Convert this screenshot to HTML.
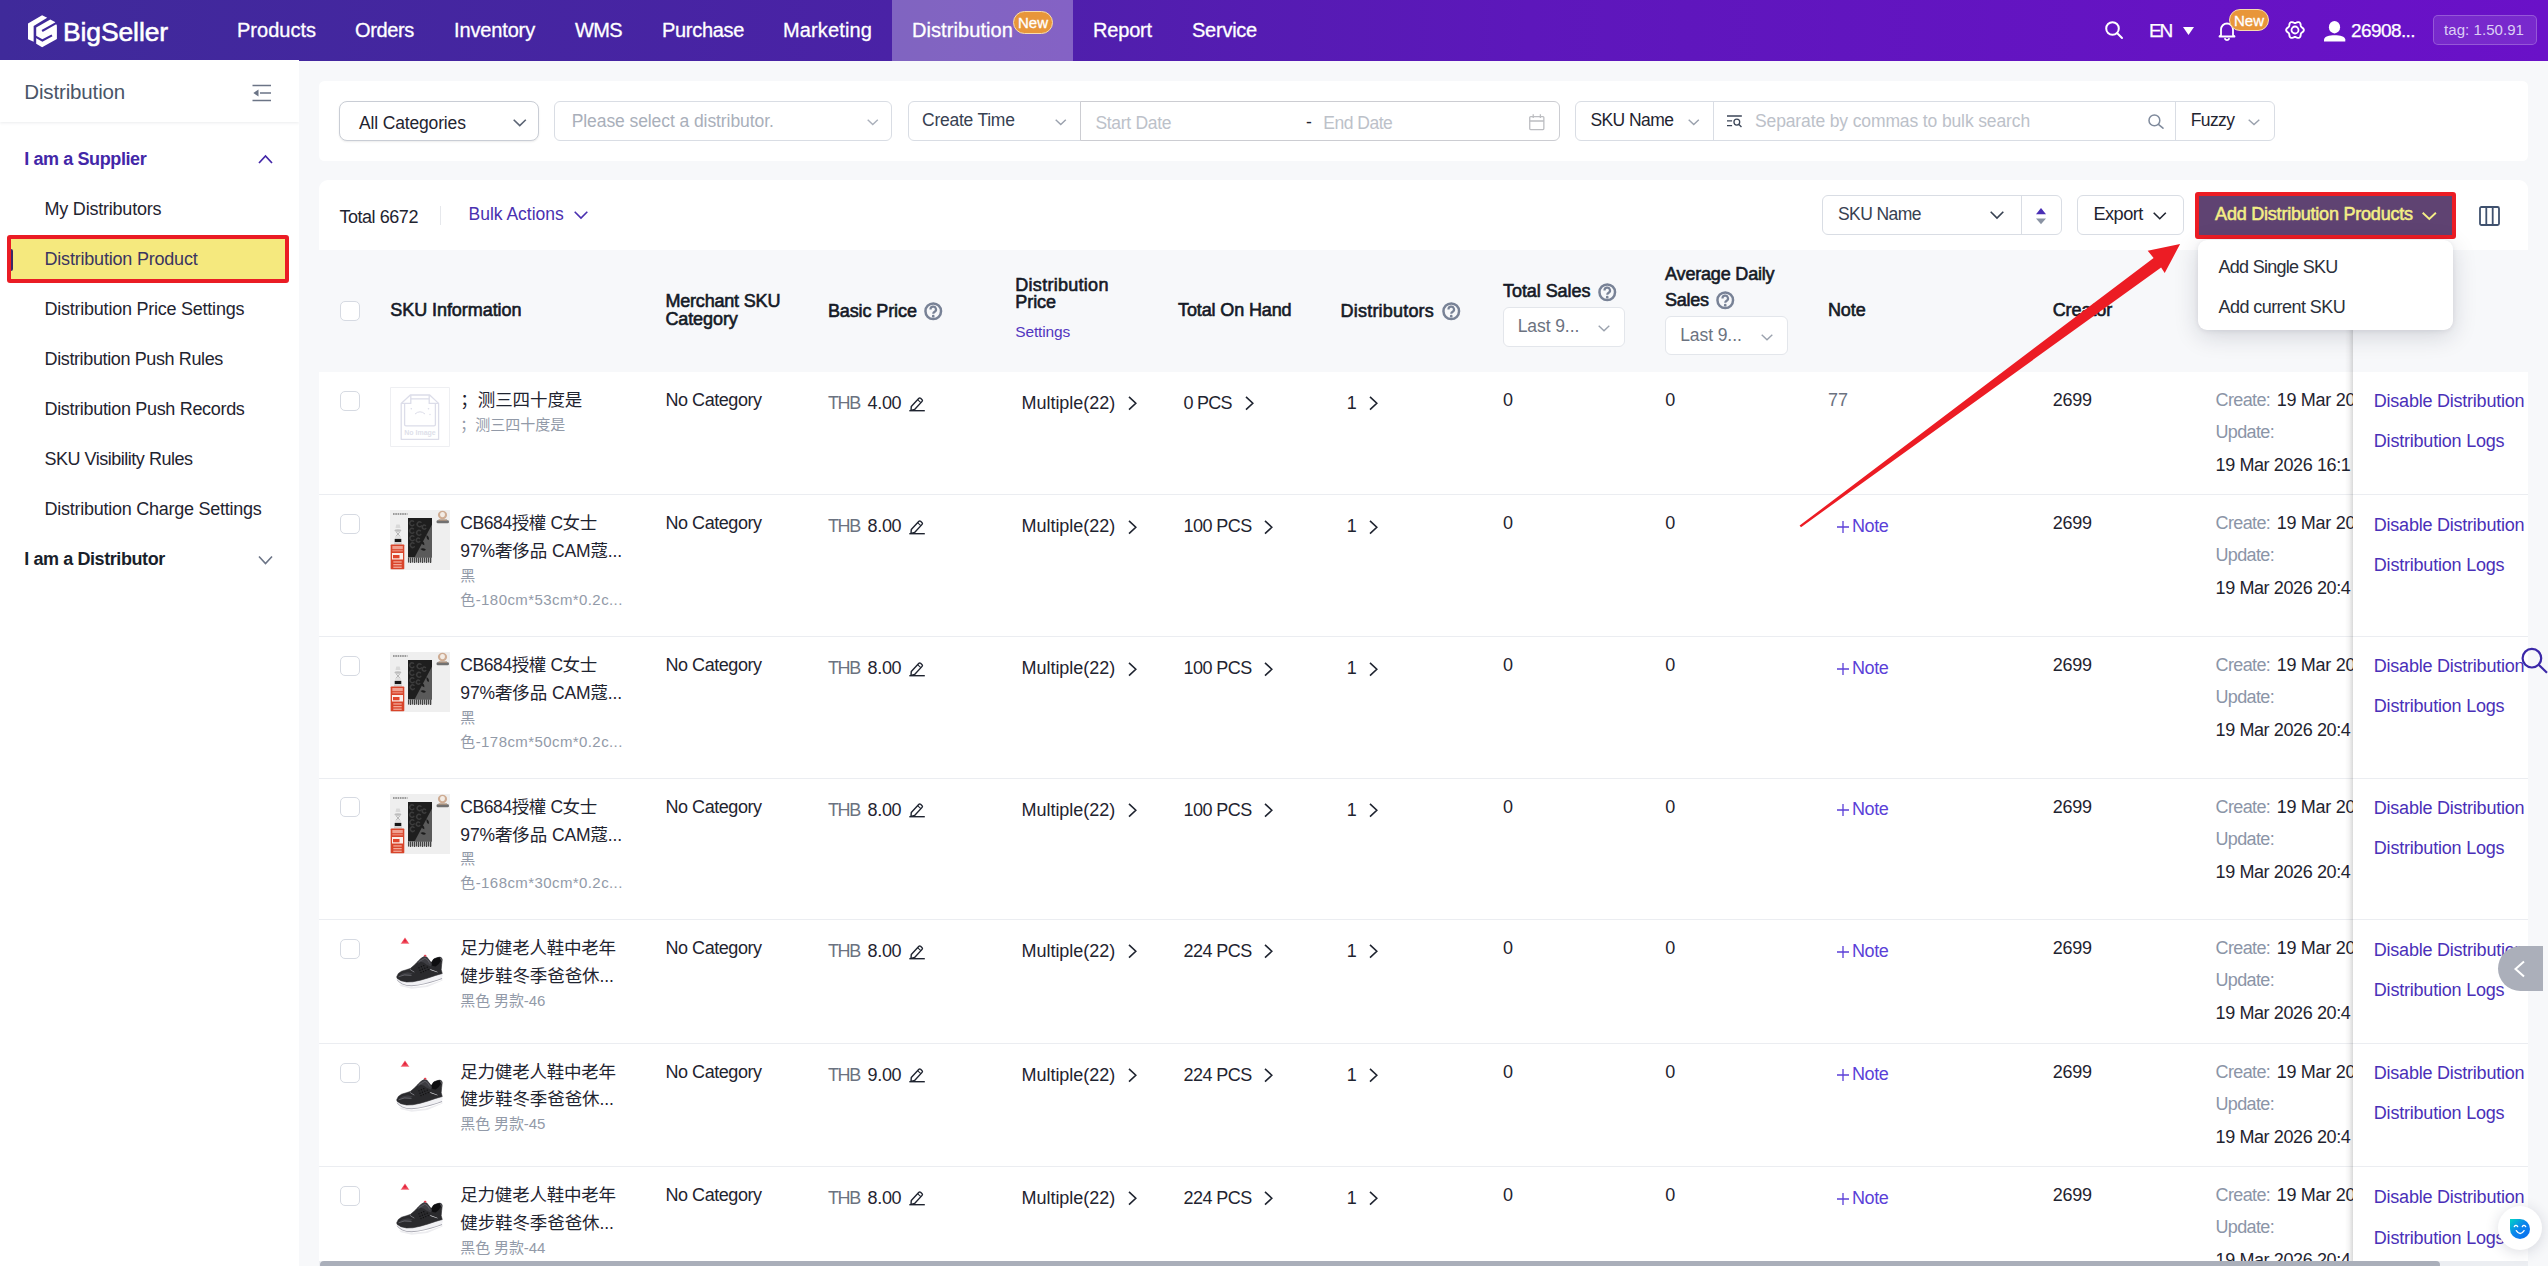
<!DOCTYPE html>
<html lang="en"><head><meta charset="utf-8"><title>BigSeller - Distribution Product</title>
<style>
*{box-sizing:border-box;margin:0;padding:0}
html,body{width:2548px;height:1266px;overflow:hidden;background:#f7f8fa;
  font-family:"Liberation Sans","Noto Sans CJK SC",sans-serif;color:#1f2430}
.abs{position:absolute}
.t{position:absolute;white-space:pre;line-height:1;}
svg{position:absolute;overflow:visible}
#nav{position:absolute;left:0;top:0;width:2548px;height:60.7px;
  background:linear-gradient(90deg,#3f2a9a 0%,#4a22a6 35%,#5d17bb 60%,#6a11c8 100%)}
#navact{position:absolute;left:892px;top:0;width:181px;height:60.7px;background:rgba(255,255,255,.30)}
.badge{position:absolute;background:#e8963a;border:1.5px solid #f7dcae;border-radius:12px;color:#fff;
  font-size:15px;line-height:1;text-align:center;-webkit-text-stroke:0.3px #fff}
#side{position:absolute;left:0;top:60px;width:298.5px;height:1206px;background:#fff;overflow:hidden}
#sidehead{position:absolute;left:0;top:0;width:298.5px;height:62px;background:#fff;
  box-shadow:0 1px 3px rgba(30,40,70,.09)}
.card{position:absolute;background:#fff;border-radius:8px}
.box{position:absolute;background:#fff;border:1px solid #d9dde4;border-radius:6px}
.sep{position:absolute;height:1px;background:#ebedf1;left:319px;width:2209px}
.cb{position:absolute;width:20px;height:20px;border:1px solid #d6dae2;border-radius:5px;background:#fff}
.img{position:absolute;width:60px;height:60px;overflow:hidden}

</style></head>
<body>
<div id="nav"><div id="navact"></div>
<svg style="left:27.85px;top:14.7px" width="29" height="32.5" viewBox="0 0 29 32.5">
<path d="M0 8.5 L14.1 0.3 L19.2 2.8 L5.65 11 V26.7 L0 24.2 Z" fill="#fff"/>
<path d="M8.2 12.6 L22.3 4.4 L27 7.1 L28.9 10.4 V23.9 L14.1 32.2 L8.2 28.7 Z" fill="#fff"/>
<path d="M14.1 16 L29 7.6" stroke="#40299b" stroke-width="2.1" fill="none"/>
<path d="M7.5 21.6 L14.4 25.5 L24 20.3" stroke="#40299b" stroke-width="2.1" fill="none"/>
</svg>
<div class="t " style="left:63.0px;top:19.0px;font-size:26.5px;font-weight:400;color:#fff;letter-spacing:-0.118px;-webkit-text-stroke:0.55px #fff;">BigSeller</div>
<div class="t " style="left:237.0px;top:20.0px;font-size:20px;font-weight:400;color:#fff;letter-spacing:0.008px;-webkit-text-stroke:0.3px #fff;">Products</div>
<div class="t " style="left:355.0px;top:20.0px;font-size:20px;font-weight:400;color:#fff;letter-spacing:-0.354px;-webkit-text-stroke:0.3px #fff;">Orders</div>
<div class="t " style="left:454.0px;top:20.0px;font-size:20px;font-weight:400;color:#fff;letter-spacing:-0.141px;-webkit-text-stroke:0.3px #fff;">Inventory</div>
<div class="t " style="left:575.0px;top:20.0px;font-size:20px;font-weight:400;color:#fff;letter-spacing:-0.630px;-webkit-text-stroke:0.3px #fff;">WMS</div>
<div class="t " style="left:662.0px;top:20.0px;font-size:20px;font-weight:400;color:#fff;letter-spacing:-0.312px;-webkit-text-stroke:0.3px #fff;">Purchase</div>
<div class="t " style="left:783.0px;top:20.0px;font-size:20px;font-weight:400;color:#fff;letter-spacing:0.132px;-webkit-text-stroke:0.3px #fff;">Marketing</div>
<div class="t " style="left:912.0px;top:20.0px;font-size:20px;font-weight:400;color:#fff;letter-spacing:0.079px;-webkit-text-stroke:0.3px #fff;">Distribution</div>
<div class="t " style="left:1093.0px;top:20.0px;font-size:20px;font-weight:400;color:#fff;letter-spacing:-0.172px;-webkit-text-stroke:0.3px #fff;">Report</div>
<div class="t " style="left:1192.0px;top:20.0px;font-size:20px;font-weight:400;color:#fff;letter-spacing:-0.243px;-webkit-text-stroke:0.3px #fff;">Service</div>
<div class="badge" style="left:1013px;top:11px;width:40px;height:23px;padding-top:3px">New</div>
<svg style="left:2104px;top:20px" width="20" height="20" viewBox="0 0 20 20" fill="none" stroke="#fff" stroke-width="2" stroke-linecap="round"><circle cx="8.5" cy="8.5" r="6.3"/><path d="M13.3 13.3 L18 18"/></svg>
<div class="t " style="left:2149.0px;top:20.7px;font-size:19px;font-weight:400;color:#fff;letter-spacing:-2.203px;-webkit-text-stroke:0.25px #fff;">EN</div>
<svg style="left:2183px;top:27px" width="11" height="8" viewBox="0 0 11 8"><path d="M0 0 H11 L5.5 8 Z" fill="#fff"/></svg>
<svg style="left:2218px;top:21px" width="18" height="20" viewBox="0 0 18 20" fill="none" stroke="#fff" stroke-width="1.8" stroke-linejoin="round" stroke-linecap="round"><path d="M3 14 V8.5 A6 6 0 0 1 15 8.5 V14 L16.5 15.5 H1.5 Z"/><path d="M7 17.8 A2.2 2.2 0 0 0 11 17.8"/></svg>
<div class="badge" style="left:2229px;top:9px;width:40px;height:22px;padding-top:2.5px">New</div>
<svg style="left:2284.6px;top:20.3px" width="20" height="20" viewBox="0 0 20 20" fill="none" stroke="#fff" stroke-width="1.9" stroke-linejoin="round"><path d="M18.85 10.00 L18.69 10.76 L18.25 11.45 L17.63 12.04 L16.98 12.54 L16.41 12.99 L16.02 13.47 L15.80 14.06 L15.69 14.77 L15.59 15.59 L15.38 16.42 L15.00 17.15 L14.43 17.66 L13.69 17.91 L12.86 17.87 L12.04 17.63 L11.29 17.31 L10.62 17.05 L10.00 16.95 L9.38 17.05 L8.71 17.31 L7.96 17.63 L7.14 17.87 L6.31 17.91 L5.58 17.66 L5.00 17.15 L4.62 16.42 L4.41 15.59 L4.31 14.77 L4.20 14.06 L3.98 13.47 L3.59 12.99 L3.02 12.54 L2.37 12.04 L1.75 11.45 L1.31 10.76 L1.15 10.00 L1.31 9.24 L1.75 8.55 L2.37 7.96 L3.02 7.46 L3.59 7.01 L3.98 6.52 L4.20 5.94 L4.31 5.23 L4.41 4.41 L4.62 3.58 L5.00 2.85 L5.57 2.34 L6.31 2.09 L7.14 2.13 L7.96 2.37 L8.71 2.69 L9.38 2.95 L10.00 3.05 L10.62 2.95 L11.29 2.69 L12.04 2.37 L12.86 2.13 L13.69 2.09 L14.43 2.34 L15.00 2.85 L15.38 3.58 L15.59 4.41 L15.69 5.23 L15.80 5.94 L16.02 6.52 L16.41 7.01 L16.98 7.46 L17.63 7.96 L18.25 8.55 L18.69 9.24 Z"/><circle cx="10" cy="10" r="3.5" stroke-width="1.8"/></svg>
<svg style="left:2324px;top:20.8px" width="21.5" height="21" viewBox="0 0 21.5 21"><ellipse cx="10.5" cy="6.2" rx="5.6" ry="6.2" fill="#fff"/><path d="M0 20.6 V18.5 C0.5 15.6 5 14.3 10.700 14.300 S20.800 15.600 21.300 18.500 V20.600 Z" fill="#fff"/></svg>
<div class="t " style="left:2351.0px;top:20.7px;font-size:19px;font-weight:400;color:#fff;letter-spacing:-0.584px;-webkit-text-stroke:0.25px #fff;">26908...</div>
<div class="abs" style="left:2433px;top:15px;width:104px;height:30px;border:1px solid rgba(255,255,255,.22);background:rgba(255,255,255,.10);border-radius:5px"></div>
<div class="t " style="left:2444.0px;top:21.6px;font-size:15px;font-weight:400;color:#dccff5;letter-spacing:0.064px;">tag: 1.50.91</div>
</div>
<div id="side"><div id="sidehead"></div></div>
<div class="t " style="left:24.3px;top:81.6px;font-size:20.5px;font-weight:400;color:#4a5568;letter-spacing:-0.146px;">Distribution</div>
<svg style="left:252px;top:84px" width="20" height="18" viewBox="0 0 20 18" fill="none" stroke="#6b7486" stroke-width="1.6"><path d="M0.5 1.5 H19 M8 9 H19 M0.5 16.5 H19"/><path d="M6.5 5.6 V12.4 L1.3 9 Z" fill="#6b7486" stroke="none"/></svg>
<div class="t " style="left:24.3px;top:150.4px;font-size:18px;font-weight:700;color:#4327a8;letter-spacing:-0.403px;">I am a Supplier</div>
<svg style="left:258px;top:154px" width="15" height="10" viewBox="0 0 15 10" fill="none" stroke="#4327a8" stroke-width="1.7"><path d="M1 9 L7.5 2 L14 9"/></svg>
<div class="abs" style="left:6.7px;top:234.6px;width:282px;height:48.3px;background:#f5e97e;border:4px solid #ea1c24;border-radius:3px"></div>
<div class="abs" style="left:10.5px;top:249px;width:2.5px;height:22px;background:#3c2a66;border-radius:0 2px 2px 0"></div>
<div class="t " style="left:44.5px;top:200.2px;font-size:18px;font-weight:400;color:#1f2430;letter-spacing:-0.214px;">My Distributors</div>
<div class="t " style="left:44.5px;top:250.1px;font-size:18px;font-weight:400;color:#3a3560;letter-spacing:-0.204px;">Distribution Product</div>
<div class="t " style="left:44.5px;top:300.0px;font-size:18px;font-weight:400;color:#1f2430;letter-spacing:-0.237px;">Distribution Price Settings</div>
<div class="t " style="left:44.5px;top:349.9px;font-size:18px;font-weight:400;color:#1f2430;letter-spacing:-0.374px;">Distribution Push Rules</div>
<div class="t " style="left:44.5px;top:399.8px;font-size:18px;font-weight:400;color:#1f2430;letter-spacing:-0.324px;">Distribution Push Records</div>
<div class="t " style="left:44.5px;top:449.7px;font-size:18px;font-weight:400;color:#1f2430;letter-spacing:-0.487px;">SKU Visibility Rules</div>
<div class="t " style="left:44.5px;top:499.6px;font-size:18px;font-weight:400;color:#1f2430;letter-spacing:-0.254px;">Distribution Charge Settings</div>
<div class="t " style="left:24.3px;top:549.9px;font-size:18px;font-weight:700;color:#1a1f2b;letter-spacing:-0.418px;">I am a Distributor</div>
<svg style="left:258px;top:555px" width="15" height="10" viewBox="0 0 15 10" fill="none" stroke="#6b7486" stroke-width="1.6"><path d="M1 1.5 L7.5 8.5 L14 1.5"/></svg>
<div class="card" style="left:319px;top:81px;width:2209px;height:80px;border-radius:5.5px"></div>
<div class="box" style="left:339px;top:101px;width:200px;height:40px;border-color:#c9cdd5;border-radius:8px;box-shadow:0 1px 2px rgba(0,0,0,.08)"></div>
<div class="t " style="left:359.0px;top:114.8px;font-size:17.5px;font-weight:400;color:#1f2430;letter-spacing:-0.154px;">All Categories</div>
<svg style="left:513px;top:119px" width="13.5" height="7.5" viewBox="0 0 13.5 7.5" fill="none" stroke="#5b6474" stroke-width="1.6"><path d="M0.7 0.7 L6.75 6.6 L12.8 0.7"/></svg>
<div class="box" style="left:554px;top:101px;width:338px;height:40px"></div>
<div class="t " style="left:571.7px;top:113.1px;font-size:17.5px;font-weight:400;color:#a9afba;letter-spacing:-0.081px;">Please select a distributor.</div>
<svg style="left:867px;top:118.5px" width="11.5" height="6.5" viewBox="0 0 11.5 6.5" fill="none" stroke="#aab0bb" stroke-width="1.4"><path d="M0.7 0.7 L5.75 5.6 L10.8 0.7"/></svg>
<div class="box" style="left:907.5px;top:101px;width:174px;height:40px;border-radius:6px 0 0 6px"></div>
<div class="t " style="left:922.0px;top:111.6px;font-size:17.5px;font-weight:400;color:#374151;letter-spacing:-0.237px;">Create Time</div>
<svg style="left:1054.5px;top:119px" width="11.5" height="6.5" viewBox="0 0 11.5 6.5" fill="none" stroke="#9aa1ad" stroke-width="1.4"><path d="M0.7 0.7 L5.75 5.6 L10.8 0.7"/></svg>
<div class="box" style="left:1080px;top:101px;width:480px;height:40px;border-color:#cccdd2;border-radius:0 6px 6px 0"></div>
<div class="t " style="left:1095.4px;top:114.8px;font-size:17.5px;font-weight:400;color:#bcc1c9;letter-spacing:-0.290px;">Start Date</div>
<div class="t " style="left:1306.0px;top:113.8px;font-size:17.5px;font-weight:400;color:#1f2430;">-</div>
<div class="t " style="left:1323.3px;top:114.8px;font-size:17.5px;font-weight:400;color:#bcc1c9;letter-spacing:-0.496px;">End Date</div>
<svg style="left:1529px;top:113.5px" width="15.6" height="16.5" viewBox="0 0 17 16.5" preserveAspectRatio="none" fill="none" stroke="#bcbdc1" stroke-width="1.4"><rect x="0.8" y="2.6" width="15.4" height="13" rx="1"/><path d="M0.8 7 H16.2 M4.6 0.3 V4 M12.4 0.3 V4"/></svg>
<div class="box" style="left:1575px;top:101px;width:700px;height:40px"></div>
<div class="abs" style="left:1713px;top:101px;width:1px;height:40px;background:#d9dde4"></div>
<div class="abs" style="left:2175px;top:101px;width:1px;height:40px;background:#d9dde4"></div>
<div class="t " style="left:1590.4px;top:111.6px;font-size:17.5px;font-weight:400;color:#1f2430;letter-spacing:-0.579px;">SKU Name</div>
<svg style="left:1688px;top:119px" width="11.5" height="6.5" viewBox="0 0 11.5 6.5" fill="none" stroke="#9aa1ad" stroke-width="1.4"><path d="M0.7 0.7 L5.75 5.6 L10.8 0.7"/></svg>
<svg style="left:1726.5px;top:114.5px" width="15.3" height="12.6" viewBox="0 0 16.5 13" preserveAspectRatio="none" fill="none" stroke="#3c4658" stroke-width="1.4"><path d="M0 1 H16 M0 6 H5.5 M0 11 H5.5"/><circle cx="10.6" cy="7.3" r="3.1"/><path d="M12.9 9.7 L15.6 12.4"/></svg>
<div class="t " style="left:1755.0px;top:113.1px;font-size:17.5px;font-weight:400;color:#bcc1c9;letter-spacing:-0.126px;">Separate by commas to bulk search</div>
<svg style="left:2148px;top:113.5px" width="16" height="15" viewBox="0 0 16 15" fill="none" stroke="#7f8a9c" stroke-width="1.5" stroke-linecap="round"><circle cx="6.4" cy="6.4" r="5.4"/><path d="M10.4 10.4 L15 14.2"/></svg>
<div class="t " style="left:2190.8px;top:111.7px;font-size:17.5px;font-weight:400;color:#1f2430;letter-spacing:-0.637px;">Fuzzy</div>
<svg style="left:2248px;top:119px" width="12" height="6.5" viewBox="0 0 12 6.5" fill="none" stroke="#9aa1ad" stroke-width="1.4"><path d="M0.7 0.7 L6.0 5.6 L11.3 0.7"/></svg>
<div class="card" style="left:319px;top:180px;width:2209px;height:1100px;border-radius:9px"></div>
<div class="t " style="left:339.4px;top:207.7px;font-size:18px;font-weight:400;color:#1f2430;letter-spacing:-0.448px;">Total 6672</div>
<div class="abs" style="left:440px;top:205.5px;width:1px;height:19px;background:#e6e8ec"></div>
<div class="t " style="left:468.5px;top:205.8px;font-size:17.5px;font-weight:400;color:#4a30b0;letter-spacing:-0.011px;">Bulk Actions</div>
<svg style="left:573.7px;top:211.4px" width="14" height="8" viewBox="0 0 14 8" fill="none" stroke="#4a30b0" stroke-width="1.6"><path d="M0.7 0.7 L7.0 7.1 L13.3 0.7"/></svg>
<div class="box" style="left:1821.8px;top:195px;width:240.2px;height:39.5px"></div>
<div class="abs" style="left:2021px;top:195px;width:1px;height:39.5px;background:#d9dde4"></div>
<div class="t " style="left:1837.9px;top:205.8px;font-size:17.5px;font-weight:400;color:#374151;letter-spacing:-0.554px;">SKU Name</div>
<svg style="left:1990.3px;top:211.4px" width="14" height="8" viewBox="0 0 14 8" fill="none" stroke="#374151" stroke-width="1.6"><path d="M0.7 0.7 L7.0 7.1 L13.3 0.7"/></svg>
<svg style="left:2036px;top:207.5px" width="10" height="16.5" viewBox="0 0 10 16.5"><path d="M5 0 L10 6.3 H0 Z" fill="#4a2fb5"/><path d="M0 10.6 H10 L5 16.3 Z" fill="#8a93a3"/></svg>
<div class="box" style="left:2077px;top:195px;width:106.5px;height:39.5px"></div>
<div class="t " style="left:2093.5px;top:205.2px;font-size:18.2px;font-weight:400;color:#1f2430;letter-spacing:-0.563px;">Export</div>
<svg style="left:2152.9px;top:211.6px" width="13.5" height="7.6" viewBox="0 0 13.5 7.6" fill="none" stroke="#1f2430" stroke-width="1.6"><path d="M0.7 0.7 L6.75 6.699999999999999 L12.8 0.7"/></svg>
<div class="abs" style="left:2195px;top:192px;width:261px;height:47px;background:#5f4372;border:4px solid #ec1c24;border-radius:3px"></div>
<div class="t " style="left:2215.1px;top:205.0px;font-size:18px;font-weight:400;color:#f4ee86;letter-spacing:-0.216px;-webkit-text-stroke:0.55px #f4ee86;">Add Distribution Products</div>
<svg style="left:2422.4px;top:211.6px" width="14.6" height="7.8" viewBox="0 0 14.6 7.8" fill="none" stroke="#f4ee86" stroke-width="1.9"><path d="M0.7 0.7 L7.3 6.8999999999999995 L13.9 0.7"/></svg>
<svg style="left:2478.5px;top:205.5px" width="21" height="20" viewBox="0 0 21 20" fill="none" stroke="#3f516e" stroke-width="1.8"><rect x="1" y="1" width="19" height="18" rx="1.5"/><path d="M7.3 1 V19 M13.7 1 V19"/></svg>
<div class="abs" style="left:319px;top:250px;width:2209px;height:122px;background:#f7f8fa"></div>
<div class="cb" style="left:340px;top:301px"></div>
<div class="t " style="left:390.3px;top:301.4px;font-size:18px;font-weight:400;color:#151a26;letter-spacing:-0.064px;-webkit-text-stroke:0.6px #151a26;">SKU Information</div>
<div class="t " style="left:665.4px;top:291.8px;font-size:18px;font-weight:400;color:#151a26;letter-spacing:-0.187px;-webkit-text-stroke:0.6px #151a26;">Merchant SKU</div>
<div class="t " style="left:665.4px;top:310.2px;font-size:18px;font-weight:400;color:#151a26;letter-spacing:-0.093px;-webkit-text-stroke:0.6px #151a26;">Category</div>
<div class="t " style="left:827.9px;top:301.9px;font-size:18px;font-weight:400;color:#151a26;letter-spacing:-0.103px;-webkit-text-stroke:0.6px #151a26;">Basic Price</div>
<svg style="left:924px;top:302.2px" width="18.5" height="18.5" viewBox="0 0 18.5 18.5" fill="none" stroke="#788296" stroke-width="2.5"><circle cx="9.25" cy="9.25" r="7.8"/><path d="M6.5 7.5 A2.75 2.75 0 1 1 10.7 9.7 C9.6 10.4 9.25 10.8 9.25 11.7" stroke-width="2.2"/><circle cx="9.25" cy="14.2" r="0.8" fill="#788296" stroke-width="1.1"/></svg>
<div class="t " style="left:1015.3px;top:275.8px;font-size:18px;font-weight:400;color:#151a26;letter-spacing:0.279px;-webkit-text-stroke:0.6px #151a26;">Distribution</div>
<div class="t " style="left:1015.3px;top:293.0px;font-size:18px;font-weight:400;color:#151a26;letter-spacing:-0.063px;-webkit-text-stroke:0.6px #151a26;">Price</div>
<div class="t " style="left:1015.3px;top:323.7px;font-size:15.5px;font-weight:400;color:#5236c0;letter-spacing:-0.152px;">Settings</div>
<div class="t " style="left:1178.0px;top:300.9px;font-size:18px;font-weight:400;color:#151a26;letter-spacing:-0.121px;-webkit-text-stroke:0.6px #151a26;">Total On Hand</div>
<div class="t " style="left:1340.6px;top:301.8px;font-size:18px;font-weight:400;color:#151a26;letter-spacing:0.197px;-webkit-text-stroke:0.6px #151a26;">Distributors</div>
<svg style="left:1441.5px;top:302.2px" width="18.5" height="18.5" viewBox="0 0 18.5 18.5" fill="none" stroke="#788296" stroke-width="2.5"><circle cx="9.25" cy="9.25" r="7.8"/><path d="M6.5 7.5 A2.75 2.75 0 1 1 10.7 9.7 C9.6 10.4 9.25 10.8 9.25 11.7" stroke-width="2.2"/><circle cx="9.25" cy="14.2" r="0.8" fill="#788296" stroke-width="1.1"/></svg>
<div class="t " style="left:1503.0px;top:282.0px;font-size:18px;font-weight:400;color:#151a26;letter-spacing:-0.060px;-webkit-text-stroke:0.6px #151a26;">Total Sales</div>
<svg style="left:1598px;top:282.5px" width="18.5" height="18.5" viewBox="0 0 18.5 18.5" fill="none" stroke="#788296" stroke-width="2.5"><circle cx="9.25" cy="9.25" r="7.8"/><path d="M6.5 7.5 A2.75 2.75 0 1 1 10.7 9.7 C9.6 10.4 9.25 10.8 9.25 11.7" stroke-width="2.2"/><circle cx="9.25" cy="14.2" r="0.8" fill="#788296" stroke-width="1.1"/></svg>
<div class="box" style="left:1503.4px;top:307.4px;width:121.5px;height:39.2px;border-color:#e3e6eb"></div>
<div class="t " style="left:1517.7px;top:317.5px;font-size:17.5px;font-weight:400;color:#6b7280;letter-spacing:-0.085px;">Last 9...</div>
<svg style="left:1598px;top:324.9px" width="12" height="6.6" viewBox="0 0 12 6.6" fill="none" stroke="#9aa1ad" stroke-width="1.4"><path d="M0.7 0.7 L6.0 5.699999999999999 L11.3 0.7"/></svg>
<div class="t " style="left:1665.1px;top:264.9px;font-size:18px;font-weight:400;color:#151a26;letter-spacing:-0.187px;-webkit-text-stroke:0.6px #151a26;">Average Daily</div>
<div class="t " style="left:1665.1px;top:291.0px;font-size:18px;font-weight:400;color:#151a26;letter-spacing:-0.306px;-webkit-text-stroke:0.6px #151a26;">Sales</div>
<svg style="left:1716px;top:291.2px" width="18.5" height="18.5" viewBox="0 0 18.5 18.5" fill="none" stroke="#788296" stroke-width="2.5"><circle cx="9.25" cy="9.25" r="7.8"/><path d="M6.5 7.5 A2.75 2.75 0 1 1 10.7 9.7 C9.6 10.4 9.25 10.8 9.25 11.7" stroke-width="2.2"/><circle cx="9.25" cy="14.2" r="0.8" fill="#788296" stroke-width="1.1"/></svg>
<div class="box" style="left:1665.4px;top:316.4px;width:122.2px;height:39px;border-color:#e3e6eb"></div>
<div class="t " style="left:1680.2px;top:327.2px;font-size:17.5px;font-weight:400;color:#6b7280;letter-spacing:-0.085px;">Last 9...</div>
<svg style="left:1760.5px;top:333.7px" width="12" height="6.6" viewBox="0 0 12 6.6" fill="none" stroke="#9aa1ad" stroke-width="1.4"><path d="M0.7 0.7 L6.0 5.699999999999999 L11.3 0.7"/></svg>
<div class="t " style="left:1827.9px;top:300.9px;font-size:18px;font-weight:400;color:#151a26;letter-spacing:-0.083px;-webkit-text-stroke:0.6px #151a26;">Note</div>
<div class="t " style="left:2052.7px;top:300.9px;font-size:18px;font-weight:400;color:#151a26;letter-spacing:-0.076px;-webkit-text-stroke:0.6px #151a26;">Creator</div>
<div class="cb" style="left:340px;top:391.3px"></div>
<div class="img" style="left:390px;top:387.0px;"><svg width="60" height="60" viewBox="0 0 60 60" style="position:static;display:block" fill="none" stroke="#dcdde9" stroke-width="1.3" stroke-linejoin="round"><rect x="0.5" y="0.5" width="59" height="59" stroke="#eeeff2" stroke-width="1"/>
<path d="M11.2 16.4 L20.3 8 H39.7 L48.6 16.4 V52.3 H11.2 Z"/><path d="M20.8 8 V16.4 H11.6 M39.2 8 V16.4 H48.4 M20.8 11.8 H39.2"/><path d="M14.6 16.8 V37.4 Q14.6 38.8 16 38.8 H44 Q45.4 38.8 45.4 37.4 V16.8"/>
<circle cx="21.3" cy="21.8" r="0.8" fill="#dcdde9" stroke="none"/><circle cx="38.5" cy="21.8" r="0.8" fill="#dcdde9" stroke="none"/><circle cx="40" cy="27.5" r="0.7" fill="#dcdde9" stroke="none"/><path d="M25 27 Q30 22.6 35 27" stroke-width="1"/>
<text x="30" y="48.3" font-family="Liberation Sans,sans-serif" font-size="7" font-weight="700" fill="#dedfea" stroke="none" text-anchor="middle">No Image</text></svg></div>
<div class="t " style="left:460.3px;top:391.7px;font-size:17.5px;font-weight:400;color:#1f2430;letter-spacing:-0.071px;">；测三四十度是</div>
<div class="t " style="left:460.3px;top:416.7px;font-size:15px;font-weight:400;color:#929aa8;">；测三四十度是</div>
<div class="t " style="left:665.4px;top:391.2px;font-size:18px;font-weight:400;color:#1f2430;letter-spacing:-0.442px;">No Category</div>
<div class="t " style="left:827.9px;top:394.2px;font-size:18px;font-weight:400;color:#6b7280;letter-spacing:-1.267px;">THB</div>
<div class="t " style="left:867.6px;top:394.2px;font-size:18px;font-weight:400;color:#1f2430;letter-spacing:-0.337px;">4.00</div>
<svg style="left:909px;top:396.6px" width="16" height="14.500" viewBox="0 0 16 14.500" fill="none" stroke="#1f2430" stroke-width="1.400" stroke-linejoin="round"><path d="M2.300 9.400 L9.900 1.300 Q10.700 0.500 11.600 1.300 L13.100 2.700 Q13.900 3.500 13.100 4.400 L5.600 12.500 L2 13.400 Z"/><path d="M8.600 2.700 L11.800 5.700" stroke-width="1.1"/><path d="M0.300 13.700 H15.800"/></svg>
<div class="t " style="left:1021.5px;top:394.2px;font-size:18px;font-weight:400;color:#1f2430;letter-spacing:-0.029px;">Multiple(22)</div>
<svg style="left:1128.3px;top:396.4px" width="9" height="14.5" viewBox="0 0 9 14.5" fill="none" stroke="#1f2430" stroke-width="1.6"><path d="M1 0.8 L7.800 7.250 L1 13.700"/></svg>
<div class="t " style="left:1183.6px;top:394.2px;font-size:18px;font-weight:400;color:#1f2430;letter-spacing:-0.766px;">0 PCS</div>
<svg style="left:1244.6px;top:396.4px" width="9" height="14.5" viewBox="0 0 9 14.5" fill="none" stroke="#1f2430" stroke-width="1.6"><path d="M1 0.8 L7.800 7.250 L1 13.700"/></svg>
<div class="t " style="left:1346.8px;top:394.2px;font-size:18px;font-weight:400;color:#1f2430;">1</div>
<svg style="left:1369px;top:396.4px" width="9" height="14.5" viewBox="0 0 9 14.5" fill="none" stroke="#1f2430" stroke-width="1.6"><path d="M1 0.8 L7.800 7.250 L1 13.700"/></svg>
<div class="t " style="left:1503.0px;top:391.2px;font-size:18px;font-weight:400;color:#1f2430;">0</div>
<div class="t " style="left:1665.2px;top:391.2px;font-size:18px;font-weight:400;color:#1f2430;">0</div>
<div class="t " style="left:1827.9px;top:391.2px;font-size:18px;font-weight:400;color:#6b7280;">77</div>
<div class="t " style="left:2052.7px;top:391.2px;font-size:18px;font-weight:400;color:#1f2430;letter-spacing:-0.212px;">2699</div>
<div class="abs" style="left:2210px;top:372.0px;width:143px;height:123.0px;overflow:hidden"><div class="t " style="left:5.5px;top:19.0px;font-size:18px;font-weight:400;color:#8b95a7;letter-spacing:-0.619px;">Create:</div><div class="t " style="left:66.7px;top:19.0px;font-size:18px;font-weight:400;color:#1f2430;letter-spacing:-0.280px;">19 Mar 2026</div><div class="t " style="left:5.5px;top:51.0px;font-size:18px;font-weight:400;color:#8b95a7;letter-spacing:-0.650px;">Update:</div><div class="t " style="left:5.5px;top:84.1px;font-size:18px;font-weight:400;color:#1f2430;letter-spacing:-0.382px;">19 Mar 2026 16:1</div></div>
<div class="sep" style="top:493.8px"></div>
<div class="cb" style="left:340px;top:513.7px"></div>
<div class="img" style="left:390px;top:509.9px;filter:blur(0.45px);"><svg width="60" height="60" viewBox="0 0 60 60" style="position:static;display:block"><rect width="60" height="60" fill="#efefef"/>
<path d="M3 4 H17.500" stroke="#2a2a2a" stroke-width="1.200" stroke-dasharray="1.600 0.700" opacity=".85"/>
<g opacity=".85"><ellipse cx="52.5" cy="5" rx="4.6" ry="4.2" fill="#c9a184"/><ellipse cx="52.5" cy="4.6" rx="2.4" ry="2.6" fill="#f4ece4"/><rect x="46.5" y="10.3" width="12.5" height="3" rx="1.4" fill="#5a5a5a"/><rect x="48.5" y="9.4" width="8.5" height="1.4" fill="#9b7b62"/></g>
<rect x="18" y="8" width="24" height="39.5" fill="#1e1e1e"/>
<g fill="none" stroke="#3c3c3c" stroke-width="1.500" stroke-linecap="round"><path d="M23.500 11.300 a2.400 2.400 0 1 0 0.300 3.600"/><path d="M31 12.300 a2.400 2.400 0 1 0 0.300 3.600"/><path d="M23.500 18.800 a2.400 2.400 0 1 0 0.300 3.600"/><path d="M30.500 20.800 a2.400 2.400 0 1 0 0.300 3.600"/><path d="M23.800 26.300 a2.400 2.400 0 1 0 0.300 3.600"/><path d="M24 33.300 a2.300 2.300 0 1 0 0.300 3.500"/><path d="M35.500 15.500 a2 2 0 1 0 0.300 3"/><path d="M29.500 28.500 a2 2 0 1 0 0.300 3"/></g>
<path d="M42 14.5 V47.5 H24.5 Z" fill="#5a5a5a"/>
<g fill="#1c1c1c"><path d="M36.5 25 q3 1.5 2.3 5 q-2.6-.6-2.3-5z"/><path d="M31.8 31 q3 1 2.5 4.2 q-3-.3-2.500-4.200z"/><path d="M30.5 39 q2.600-1.600 5.500 0.800 q-2.400 2.400-5.500-.8z"/></g>
<rect x="18" y="47.500" width="24" height="5" fill="#8a8a8a" opacity=".55"/><g stroke="#454545" stroke-width="1.100"><path d="M18.500 47.500v5M20.500 47.500v5.500M22.500 47.500v5M24.500 47.500v5.600M26.500 47.500v5M28.500 47.500v5.600M30.500 47.500v5M32.500 47.500v5.500M34.500 47.500v5M36.500 47.500v5.600M38.500 47.500v5M40.500 47.500v5.500"/></g>
<g><path d="M6.300 14.500h3.400l.8 3.500h-5z" fill="#d9d9d9"/><ellipse cx="7.900" cy="20.500" rx="3.400" ry="1.300" fill="#bdbdbd"/><path d="M6.300 22l3.400 4M9.700 22l-3.400 4" stroke="#999" stroke-width=".7"/><rect x="5" y="26" width="6" height="2.800" fill="#e0e0e0"/><rect x="4.700" y="28.900" width="6.600" height="3.200" fill="#161616"/><rect x="4" y="32.500" width="8" height="2" fill="#cfcfcf"/></g>
<rect x="0.700" y="34.500" width="13.600" height="24.800" rx="0.800" fill="#d8442a"/>
<rect x="2.300" y="36" width="10.500" height="3.200" fill="#f0a090"/><rect x="2.300" y="40.200" width="10.500" height="1.200" fill="#ee8d7a"/>
<rect x="2" y="43" width="11" height="6.500" fill="#fbeeea"/><rect x="3" y="45" width="6.500" height="3.300" fill="#e0452c"/>
<rect x="3.300" y="51.300" width="8.400" height="1.300" fill="#f3a898"/><rect x="3.300" y="54" width="8.400" height="1.300" fill="#f3a898"/><rect x="3.300" y="56.600" width="8.400" height="1.300" fill="#f3a898"/>
</svg></div>
<div class="t " style="left:460.3px;top:515.4px;font-size:17.5px;font-weight:400;color:#1f2430;letter-spacing:-0.411px;">CB684授權 C女士</div>
<div class="t " style="left:460.3px;top:542.9px;font-size:17.5px;font-weight:400;color:#1f2430;letter-spacing:-0.112px;">97%奢侈品 CAM蔻...</div>
<div class="t " style="left:460.3px;top:568.1px;font-size:15px;font-weight:400;color:#929aa8;">黑</div>
<div class="t " style="left:460.3px;top:591.9px;font-size:15px;font-weight:400;color:#929aa8;letter-spacing:0.413px;">色-180cm*53cm*0.2c...</div>
<div class="t " style="left:665.4px;top:514.4px;font-size:18px;font-weight:400;color:#1f2430;letter-spacing:-0.442px;">No Category</div>
<div class="t " style="left:827.9px;top:517.4px;font-size:18px;font-weight:400;color:#6b7280;letter-spacing:-1.267px;">THB</div>
<div class="t " style="left:867.6px;top:517.4px;font-size:18px;font-weight:400;color:#1f2430;letter-spacing:-0.337px;">8.00</div>
<svg style="left:909px;top:519.8px" width="16" height="14.500" viewBox="0 0 16 14.500" fill="none" stroke="#1f2430" stroke-width="1.400" stroke-linejoin="round"><path d="M2.300 9.400 L9.900 1.300 Q10.700 0.500 11.600 1.300 L13.100 2.700 Q13.900 3.500 13.100 4.400 L5.600 12.500 L2 13.400 Z"/><path d="M8.600 2.700 L11.800 5.700" stroke-width="1.1"/><path d="M0.300 13.700 H15.800"/></svg>
<div class="t " style="left:1021.5px;top:517.4px;font-size:18px;font-weight:400;color:#1f2430;letter-spacing:-0.029px;">Multiple(22)</div>
<svg style="left:1128.3px;top:519.6px" width="9" height="14.5" viewBox="0 0 9 14.5" fill="none" stroke="#1f2430" stroke-width="1.6"><path d="M1 0.8 L7.800 7.250 L1 13.700"/></svg>
<div class="t " style="left:1183.6px;top:517.4px;font-size:18px;font-weight:400;color:#1f2430;letter-spacing:-0.578px;">100 PCS</div>
<svg style="left:1264.3999999999999px;top:519.6px" width="9" height="14.5" viewBox="0 0 9 14.5" fill="none" stroke="#1f2430" stroke-width="1.6"><path d="M1 0.8 L7.800 7.250 L1 13.700"/></svg>
<div class="t " style="left:1346.8px;top:517.4px;font-size:18px;font-weight:400;color:#1f2430;">1</div>
<svg style="left:1369px;top:519.6px" width="9" height="14.5" viewBox="0 0 9 14.5" fill="none" stroke="#1f2430" stroke-width="1.6"><path d="M1 0.8 L7.800 7.250 L1 13.700"/></svg>
<div class="t " style="left:1503.0px;top:514.4px;font-size:18px;font-weight:400;color:#1f2430;">0</div>
<div class="t " style="left:1665.2px;top:514.4px;font-size:18px;font-weight:400;color:#1f2430;">0</div>
<svg style="left:1836.600px;top:521.0px" width="12" height="12" viewBox="0 0 12 12" stroke="#5b3fd8" stroke-width="1.300"><path d="M6 0 V12 M0 6 H12"/></svg>
<div class="t " style="left:1852.0px;top:517.0px;font-size:18px;font-weight:400;color:#5b3fd8;letter-spacing:-0.383px;">Note</div>
<div class="t " style="left:2052.7px;top:514.4px;font-size:18px;font-weight:400;color:#1f2430;letter-spacing:-0.212px;">2699</div>
<div class="abs" style="left:2210px;top:495.4px;width:143px;height:123.0px;overflow:hidden"><div class="t " style="left:5.5px;top:19.0px;font-size:18px;font-weight:400;color:#8b95a7;letter-spacing:-0.619px;">Create:</div><div class="t " style="left:66.7px;top:19.0px;font-size:18px;font-weight:400;color:#1f2430;letter-spacing:-0.280px;">19 Mar 2026</div><div class="t " style="left:5.5px;top:51.0px;font-size:18px;font-weight:400;color:#8b95a7;letter-spacing:-0.650px;">Update:</div><div class="t " style="left:5.5px;top:84.1px;font-size:18px;font-weight:400;color:#1f2430;letter-spacing:-0.382px;">19 Mar 2026 20:4</div></div>
<div class="sep" style="top:635.9px"></div>
<div class="cb" style="left:340px;top:655.8px"></div>
<div class="img" style="left:390px;top:652.0px;filter:blur(0.45px);"><svg width="60" height="60" viewBox="0 0 60 60" style="position:static;display:block"><rect width="60" height="60" fill="#efefef"/>
<path d="M3 4 H17.500" stroke="#2a2a2a" stroke-width="1.200" stroke-dasharray="1.600 0.700" opacity=".85"/>
<g opacity=".85"><ellipse cx="52.5" cy="5" rx="4.6" ry="4.2" fill="#c9a184"/><ellipse cx="52.5" cy="4.6" rx="2.4" ry="2.6" fill="#f4ece4"/><rect x="46.5" y="10.3" width="12.5" height="3" rx="1.4" fill="#5a5a5a"/><rect x="48.5" y="9.4" width="8.5" height="1.4" fill="#9b7b62"/></g>
<rect x="18" y="8" width="24" height="39.5" fill="#1e1e1e"/>
<g fill="none" stroke="#3c3c3c" stroke-width="1.500" stroke-linecap="round"><path d="M23.500 11.300 a2.400 2.400 0 1 0 0.300 3.600"/><path d="M31 12.300 a2.400 2.400 0 1 0 0.300 3.600"/><path d="M23.500 18.800 a2.400 2.400 0 1 0 0.300 3.600"/><path d="M30.500 20.800 a2.400 2.400 0 1 0 0.300 3.600"/><path d="M23.800 26.300 a2.400 2.400 0 1 0 0.300 3.600"/><path d="M24 33.300 a2.300 2.300 0 1 0 0.300 3.500"/><path d="M35.500 15.500 a2 2 0 1 0 0.300 3"/><path d="M29.500 28.500 a2 2 0 1 0 0.300 3"/></g>
<path d="M42 14.5 V47.5 H24.5 Z" fill="#5a5a5a"/>
<g fill="#1c1c1c"><path d="M36.5 25 q3 1.5 2.3 5 q-2.6-.6-2.3-5z"/><path d="M31.8 31 q3 1 2.5 4.2 q-3-.3-2.500-4.200z"/><path d="M30.5 39 q2.600-1.600 5.500 0.800 q-2.400 2.400-5.500-.8z"/></g>
<rect x="18" y="47.500" width="24" height="5" fill="#8a8a8a" opacity=".55"/><g stroke="#454545" stroke-width="1.100"><path d="M18.500 47.500v5M20.500 47.500v5.500M22.500 47.500v5M24.500 47.500v5.600M26.500 47.500v5M28.500 47.500v5.600M30.500 47.500v5M32.500 47.500v5.500M34.500 47.500v5M36.500 47.500v5.600M38.500 47.500v5M40.500 47.500v5.500"/></g>
<g><path d="M6.300 14.500h3.400l.8 3.500h-5z" fill="#d9d9d9"/><ellipse cx="7.900" cy="20.500" rx="3.400" ry="1.300" fill="#bdbdbd"/><path d="M6.300 22l3.400 4M9.700 22l-3.400 4" stroke="#999" stroke-width=".7"/><rect x="5" y="26" width="6" height="2.800" fill="#e0e0e0"/><rect x="4.700" y="28.900" width="6.600" height="3.200" fill="#161616"/><rect x="4" y="32.500" width="8" height="2" fill="#cfcfcf"/></g>
<rect x="0.700" y="34.500" width="13.600" height="24.800" rx="0.800" fill="#d8442a"/>
<rect x="2.300" y="36" width="10.500" height="3.200" fill="#f0a090"/><rect x="2.300" y="40.200" width="10.500" height="1.200" fill="#ee8d7a"/>
<rect x="2" y="43" width="11" height="6.500" fill="#fbeeea"/><rect x="3" y="45" width="6.500" height="3.300" fill="#e0452c"/>
<rect x="3.300" y="51.300" width="8.400" height="1.300" fill="#f3a898"/><rect x="3.300" y="54" width="8.400" height="1.300" fill="#f3a898"/><rect x="3.300" y="56.600" width="8.400" height="1.300" fill="#f3a898"/>
</svg></div>
<div class="t " style="left:460.3px;top:657.0px;font-size:17.5px;font-weight:400;color:#1f2430;letter-spacing:-0.411px;">CB684授權 C女士</div>
<div class="t " style="left:460.3px;top:684.5px;font-size:17.5px;font-weight:400;color:#1f2430;letter-spacing:-0.112px;">97%奢侈品 CAM蔻...</div>
<div class="t " style="left:460.3px;top:709.7px;font-size:15px;font-weight:400;color:#929aa8;">黑</div>
<div class="t " style="left:460.3px;top:733.5px;font-size:15px;font-weight:400;color:#929aa8;letter-spacing:0.413px;">色-178cm*50cm*0.2c...</div>
<div class="t " style="left:665.4px;top:656.4px;font-size:18px;font-weight:400;color:#1f2430;letter-spacing:-0.442px;">No Category</div>
<div class="t " style="left:827.9px;top:659.4px;font-size:18px;font-weight:400;color:#6b7280;letter-spacing:-1.267px;">THB</div>
<div class="t " style="left:867.6px;top:659.4px;font-size:18px;font-weight:400;color:#1f2430;letter-spacing:-0.337px;">8.00</div>
<svg style="left:909px;top:661.8000000000001px" width="16" height="14.500" viewBox="0 0 16 14.500" fill="none" stroke="#1f2430" stroke-width="1.400" stroke-linejoin="round"><path d="M2.300 9.400 L9.900 1.300 Q10.700 0.500 11.600 1.300 L13.100 2.700 Q13.900 3.500 13.100 4.400 L5.600 12.500 L2 13.400 Z"/><path d="M8.600 2.700 L11.800 5.700" stroke-width="1.1"/><path d="M0.300 13.700 H15.800"/></svg>
<div class="t " style="left:1021.5px;top:659.4px;font-size:18px;font-weight:400;color:#1f2430;letter-spacing:-0.029px;">Multiple(22)</div>
<svg style="left:1128.3px;top:661.6px" width="9" height="14.5" viewBox="0 0 9 14.5" fill="none" stroke="#1f2430" stroke-width="1.6"><path d="M1 0.8 L7.800 7.250 L1 13.700"/></svg>
<div class="t " style="left:1183.6px;top:659.4px;font-size:18px;font-weight:400;color:#1f2430;letter-spacing:-0.578px;">100 PCS</div>
<svg style="left:1264.3999999999999px;top:661.6px" width="9" height="14.5" viewBox="0 0 9 14.5" fill="none" stroke="#1f2430" stroke-width="1.6"><path d="M1 0.8 L7.800 7.250 L1 13.700"/></svg>
<div class="t " style="left:1346.8px;top:659.4px;font-size:18px;font-weight:400;color:#1f2430;">1</div>
<svg style="left:1369px;top:661.6px" width="9" height="14.5" viewBox="0 0 9 14.5" fill="none" stroke="#1f2430" stroke-width="1.6"><path d="M1 0.8 L7.800 7.250 L1 13.700"/></svg>
<div class="t " style="left:1503.0px;top:656.4px;font-size:18px;font-weight:400;color:#1f2430;">0</div>
<div class="t " style="left:1665.2px;top:656.4px;font-size:18px;font-weight:400;color:#1f2430;">0</div>
<svg style="left:1836.600px;top:663.0px" width="12" height="12" viewBox="0 0 12 12" stroke="#5b3fd8" stroke-width="1.300"><path d="M6 0 V12 M0 6 H12"/></svg>
<div class="t " style="left:1852.0px;top:659.0px;font-size:18px;font-weight:400;color:#5b3fd8;letter-spacing:-0.383px;">Note</div>
<div class="t " style="left:2052.7px;top:656.4px;font-size:18px;font-weight:400;color:#1f2430;letter-spacing:-0.212px;">2699</div>
<div class="abs" style="left:2210px;top:637.1px;width:143px;height:123.0px;overflow:hidden"><div class="t " style="left:5.5px;top:19.0px;font-size:18px;font-weight:400;color:#8b95a7;letter-spacing:-0.619px;">Create:</div><div class="t " style="left:66.7px;top:19.0px;font-size:18px;font-weight:400;color:#1f2430;letter-spacing:-0.280px;">19 Mar 2026</div><div class="t " style="left:5.5px;top:51.0px;font-size:18px;font-weight:400;color:#8b95a7;letter-spacing:-0.650px;">Update:</div><div class="t " style="left:5.5px;top:84.1px;font-size:18px;font-weight:400;color:#1f2430;letter-spacing:-0.382px;">19 Mar 2026 20:4</div></div>
<div class="sep" style="top:778.0px"></div>
<div class="cb" style="left:340px;top:797.1px"></div>
<div class="img" style="left:390px;top:794.1px;filter:blur(0.45px);"><svg width="60" height="60" viewBox="0 0 60 60" style="position:static;display:block"><rect width="60" height="60" fill="#efefef"/>
<path d="M3 4 H17.500" stroke="#2a2a2a" stroke-width="1.200" stroke-dasharray="1.600 0.700" opacity=".85"/>
<g opacity=".85"><ellipse cx="52.5" cy="5" rx="4.6" ry="4.2" fill="#c9a184"/><ellipse cx="52.5" cy="4.6" rx="2.4" ry="2.6" fill="#f4ece4"/><rect x="46.5" y="10.3" width="12.5" height="3" rx="1.4" fill="#5a5a5a"/><rect x="48.5" y="9.4" width="8.5" height="1.4" fill="#9b7b62"/></g>
<rect x="18" y="8" width="24" height="39.5" fill="#1e1e1e"/>
<g fill="none" stroke="#3c3c3c" stroke-width="1.500" stroke-linecap="round"><path d="M23.500 11.300 a2.400 2.400 0 1 0 0.300 3.600"/><path d="M31 12.300 a2.400 2.400 0 1 0 0.300 3.600"/><path d="M23.500 18.800 a2.400 2.400 0 1 0 0.300 3.600"/><path d="M30.500 20.800 a2.400 2.400 0 1 0 0.300 3.600"/><path d="M23.800 26.300 a2.400 2.400 0 1 0 0.300 3.600"/><path d="M24 33.300 a2.300 2.300 0 1 0 0.300 3.500"/><path d="M35.500 15.500 a2 2 0 1 0 0.300 3"/><path d="M29.500 28.500 a2 2 0 1 0 0.300 3"/></g>
<path d="M42 14.5 V47.5 H24.5 Z" fill="#5a5a5a"/>
<g fill="#1c1c1c"><path d="M36.5 25 q3 1.5 2.3 5 q-2.6-.6-2.3-5z"/><path d="M31.8 31 q3 1 2.5 4.2 q-3-.3-2.500-4.200z"/><path d="M30.5 39 q2.600-1.600 5.500 0.800 q-2.400 2.400-5.500-.8z"/></g>
<rect x="18" y="47.500" width="24" height="5" fill="#8a8a8a" opacity=".55"/><g stroke="#454545" stroke-width="1.100"><path d="M18.500 47.500v5M20.500 47.500v5.500M22.500 47.500v5M24.500 47.500v5.600M26.500 47.500v5M28.500 47.500v5.600M30.500 47.500v5M32.500 47.500v5.500M34.500 47.500v5M36.500 47.500v5.600M38.500 47.500v5M40.500 47.500v5.500"/></g>
<g><path d="M6.300 14.500h3.400l.8 3.500h-5z" fill="#d9d9d9"/><ellipse cx="7.900" cy="20.500" rx="3.400" ry="1.300" fill="#bdbdbd"/><path d="M6.300 22l3.400 4M9.700 22l-3.400 4" stroke="#999" stroke-width=".7"/><rect x="5" y="26" width="6" height="2.800" fill="#e0e0e0"/><rect x="4.700" y="28.900" width="6.600" height="3.200" fill="#161616"/><rect x="4" y="32.500" width="8" height="2" fill="#cfcfcf"/></g>
<rect x="0.700" y="34.500" width="13.600" height="24.800" rx="0.800" fill="#d8442a"/>
<rect x="2.300" y="36" width="10.500" height="3.200" fill="#f0a090"/><rect x="2.300" y="40.200" width="10.500" height="1.200" fill="#ee8d7a"/>
<rect x="2" y="43" width="11" height="6.500" fill="#fbeeea"/><rect x="3" y="45" width="6.500" height="3.300" fill="#e0452c"/>
<rect x="3.300" y="51.300" width="8.400" height="1.300" fill="#f3a898"/><rect x="3.300" y="54" width="8.400" height="1.300" fill="#f3a898"/><rect x="3.300" y="56.600" width="8.400" height="1.300" fill="#f3a898"/>
</svg></div>
<div class="t " style="left:460.3px;top:799.1px;font-size:17.5px;font-weight:400;color:#1f2430;letter-spacing:-0.411px;">CB684授權 C女士</div>
<div class="t " style="left:460.3px;top:826.6px;font-size:17.5px;font-weight:400;color:#1f2430;letter-spacing:-0.112px;">97%奢侈品 CAM蔻...</div>
<div class="t " style="left:460.3px;top:850.8px;font-size:15px;font-weight:400;color:#929aa8;">黑</div>
<div class="t " style="left:460.3px;top:874.6px;font-size:15px;font-weight:400;color:#929aa8;letter-spacing:0.413px;">色-168cm*30cm*0.2c...</div>
<div class="t " style="left:665.4px;top:797.8px;font-size:18px;font-weight:400;color:#1f2430;letter-spacing:-0.442px;">No Category</div>
<div class="t " style="left:827.9px;top:800.8px;font-size:18px;font-weight:400;color:#6b7280;letter-spacing:-1.267px;">THB</div>
<div class="t " style="left:867.6px;top:800.8px;font-size:18px;font-weight:400;color:#1f2430;letter-spacing:-0.337px;">8.00</div>
<svg style="left:909px;top:803.2px" width="16" height="14.500" viewBox="0 0 16 14.500" fill="none" stroke="#1f2430" stroke-width="1.400" stroke-linejoin="round"><path d="M2.300 9.400 L9.900 1.300 Q10.700 0.500 11.600 1.300 L13.100 2.700 Q13.900 3.500 13.100 4.400 L5.600 12.500 L2 13.400 Z"/><path d="M8.600 2.700 L11.800 5.700" stroke-width="1.1"/><path d="M0.300 13.700 H15.800"/></svg>
<div class="t " style="left:1021.5px;top:800.8px;font-size:18px;font-weight:400;color:#1f2430;letter-spacing:-0.029px;">Multiple(22)</div>
<svg style="left:1128.3px;top:803.0px" width="9" height="14.5" viewBox="0 0 9 14.5" fill="none" stroke="#1f2430" stroke-width="1.6"><path d="M1 0.8 L7.800 7.250 L1 13.700"/></svg>
<div class="t " style="left:1183.6px;top:800.8px;font-size:18px;font-weight:400;color:#1f2430;letter-spacing:-0.578px;">100 PCS</div>
<svg style="left:1264.3999999999999px;top:803.0px" width="9" height="14.5" viewBox="0 0 9 14.5" fill="none" stroke="#1f2430" stroke-width="1.6"><path d="M1 0.8 L7.800 7.250 L1 13.700"/></svg>
<div class="t " style="left:1346.8px;top:800.8px;font-size:18px;font-weight:400;color:#1f2430;">1</div>
<svg style="left:1369px;top:803.0px" width="9" height="14.5" viewBox="0 0 9 14.5" fill="none" stroke="#1f2430" stroke-width="1.6"><path d="M1 0.8 L7.800 7.250 L1 13.700"/></svg>
<div class="t " style="left:1503.0px;top:797.8px;font-size:18px;font-weight:400;color:#1f2430;">0</div>
<div class="t " style="left:1665.2px;top:797.8px;font-size:18px;font-weight:400;color:#1f2430;">0</div>
<svg style="left:1836.600px;top:804.4px" width="12" height="12" viewBox="0 0 12 12" stroke="#5b3fd8" stroke-width="1.300"><path d="M6 0 V12 M0 6 H12"/></svg>
<div class="t " style="left:1852.0px;top:800.4px;font-size:18px;font-weight:400;color:#5b3fd8;letter-spacing:-0.383px;">Note</div>
<div class="t " style="left:2052.7px;top:797.8px;font-size:18px;font-weight:400;color:#1f2430;letter-spacing:-0.212px;">2699</div>
<div class="abs" style="left:2210px;top:779.2px;width:143px;height:123.0px;overflow:hidden"><div class="t " style="left:5.5px;top:19.0px;font-size:18px;font-weight:400;color:#8b95a7;letter-spacing:-0.619px;">Create:</div><div class="t " style="left:66.7px;top:19.0px;font-size:18px;font-weight:400;color:#1f2430;letter-spacing:-0.280px;">19 Mar 2026</div><div class="t " style="left:5.5px;top:51.0px;font-size:18px;font-weight:400;color:#8b95a7;letter-spacing:-0.650px;">Update:</div><div class="t " style="left:5.5px;top:84.1px;font-size:18px;font-weight:400;color:#1f2430;letter-spacing:-0.382px;">19 Mar 2026 20:4</div></div>
<div class="sep" style="top:919.4px"></div>
<div class="cb" style="left:340px;top:939.3px"></div>
<div class="img" style="left:390px;top:935.5px;filter:blur(0.45px);"><svg width="60" height="60" viewBox="0 0 60 60" style="position:static;display:block"><rect width="60" height="60" fill="#fff"/>
<path d="M15 1.4 L19.2 7.8 H10.800 Z" fill="#f04858"/><path d="M15 3 l1.600 2.600 h-3.200z" fill="#dc1f3c"/><rect x="10.800" y="7.300" width="8.400" height="0.700" fill="#f59aa4"/>
<polygon points="8.96,48.27 21.60,51.11 35.50,49.53 50.66,44.48 52.56,43.21 52.56,44.48 37.39,51.11 21.60,52.69 10.85,50.16" fill="#ededf0"/>
<polygon points="6.94,41.82 10.85,44.35 16.54,45.61 22.86,45.36 30.44,43.72 38.03,41.44 45.61,38.98 52.31,37.21 52.69,40.05 51.93,42.08 46.87,43.97 40.55,45.87 34.23,47.45 27.91,48.71 21.60,49.34 16.54,49.03 12.12,47.45 8.96,45.23 6.94,43.21" fill="#f1f1f4"/>
<polygon points="6.94,43.21 8.96,45.23 12.12,47.45 16.54,49.03 21.60,49.34 27.91,48.71 34.23,47.45 40.55,45.87 46.87,43.97 51.93,42.08 52.24,42.90 46.87,44.86 40.55,46.75 34.23,48.27 27.91,49.53 21.60,50.16 16.54,49.85 11.80,48.27 8.64,46.06 6.81,43.97" fill="#a4a4ae"/>
<polygon points="6.75,40.68 8.33,37.53 11.48,35.31 16.54,33.73 20.33,32.47 24.12,29.31 27.91,25.52 31.07,22.36 34.23,20.46 36.76,21.10 39.92,24.89 41.18,26.78 43.71,22.99 46.87,21.73 50.03,21.10 51.61,22.04 52.24,23.62 51.61,28.68 51.17,33.73 52.24,37.53 45.61,39.42 38.03,41.95 30.44,44.16 22.86,45.74 16.54,45.93 10.85,44.67 7.06,42.26" fill="#2a2a2d" stroke="#2a2a2d" stroke-width="0.600" stroke-linejoin="round"/>
<polygon points="41.18,26.78 43.71,22.99 46.87,21.73 50.03,21.10 51.42,22.04 50.66,24.89 48.77,28.05 45.61,30.57 42.45,29.94" fill="#0e0e10"/>
<polygon points="26.97,26.47 31.07,22.36 34.23,20.78 37.08,21.41 39.92,24.89 41.82,28.05 40.55,30.57 36.76,28.68 33.60,26.47 30.44,25.83 28.55,27.41" fill="#3d3d42"/>
<path d="M29 25.600 L35 22.300 Q38 23.300 39.800 27.600" stroke="#5e5e64" stroke-width="0.900" fill="none"/>
<polygon points="8.96,39.42 12.75,37.21 17.80,36.26 22.86,37.53 19.70,39.42 14.01,40.05" fill="#3b3b40"/>
<path d="M8.500 40.800 Q14 37.600 21.500 39.500" stroke="#6a6a70" stroke-width="0.800" fill="none"/>
<polygon points="39.92,33.10 47.19,35.63 47.82,36.58 40.55,34.05" fill="#e4e4e8"/>
<polygon points="19.70,33.10 24.12,35.63 24.44,36.39 20.08,33.86" fill="#b9b9c0"/>
<path d="M33.600 19.700 l1.500-1.300 1.700 1.700 -1.300 0.700z" fill="#e8384a"/>
<path d="M49.500 21.300 q2.200-.3 2.500 2 l-.3 2.400 q-1.200-2.400-2.200-4.400z" fill="#55555a"/>
<g fill="#0b0b0c"><circle cx="29" cy="31.800" r=".62"/><circle cx="31.400" cy="30.700" r=".62"/><circle cx="33.800" cy="29.700" r=".62"/><circle cx="30" cy="34.200" r=".62"/><circle cx="32.400" cy="33.200" r=".62"/><circle cx="34.800" cy="32.200" r=".62"/><circle cx="37.200" cy="31.200" r=".62"/><circle cx="31" cy="36.600" r=".62"/><circle cx="33.400" cy="35.600" r=".62"/><circle cx="35.800" cy="34.600" r=".62"/><circle cx="38.200" cy="33.600" r=".62"/></g>
</svg></div>
<div class="t " style="left:460.3px;top:940.0px;font-size:17.5px;font-weight:400;color:#1f2430;letter-spacing:-0.211px;">足力健老人鞋中老年</div>
<div class="t " style="left:460.3px;top:967.5px;font-size:17.5px;font-weight:400;color:#1f2430;letter-spacing:-0.109px;">健步鞋冬季爸爸休...</div>
<div class="t " style="left:460.3px;top:992.6px;font-size:15px;font-weight:400;color:#929aa8;letter-spacing:-0.132px;">黑色 男款-46</div>
<div class="t " style="left:665.4px;top:939.2px;font-size:18px;font-weight:400;color:#1f2430;letter-spacing:-0.442px;">No Category</div>
<div class="t " style="left:827.9px;top:942.2px;font-size:18px;font-weight:400;color:#6b7280;letter-spacing:-1.267px;">THB</div>
<div class="t " style="left:867.6px;top:942.2px;font-size:18px;font-weight:400;color:#1f2430;letter-spacing:-0.337px;">8.00</div>
<svg style="left:909px;top:944.6px" width="16" height="14.500" viewBox="0 0 16 14.500" fill="none" stroke="#1f2430" stroke-width="1.400" stroke-linejoin="round"><path d="M2.300 9.400 L9.900 1.300 Q10.700 0.500 11.600 1.300 L13.100 2.700 Q13.900 3.500 13.100 4.400 L5.600 12.500 L2 13.400 Z"/><path d="M8.600 2.700 L11.800 5.700" stroke-width="1.1"/><path d="M0.300 13.700 H15.800"/></svg>
<div class="t " style="left:1021.5px;top:942.2px;font-size:18px;font-weight:400;color:#1f2430;letter-spacing:-0.029px;">Multiple(22)</div>
<svg style="left:1128.3px;top:944.4px" width="9" height="14.5" viewBox="0 0 9 14.5" fill="none" stroke="#1f2430" stroke-width="1.6"><path d="M1 0.8 L7.800 7.250 L1 13.700"/></svg>
<div class="t " style="left:1183.6px;top:942.2px;font-size:18px;font-weight:400;color:#1f2430;letter-spacing:-0.578px;">224 PCS</div>
<svg style="left:1264.3999999999999px;top:944.4px" width="9" height="14.5" viewBox="0 0 9 14.5" fill="none" stroke="#1f2430" stroke-width="1.6"><path d="M1 0.8 L7.800 7.250 L1 13.700"/></svg>
<div class="t " style="left:1346.8px;top:942.2px;font-size:18px;font-weight:400;color:#1f2430;">1</div>
<svg style="left:1369px;top:944.4px" width="9" height="14.5" viewBox="0 0 9 14.5" fill="none" stroke="#1f2430" stroke-width="1.6"><path d="M1 0.8 L7.800 7.250 L1 13.700"/></svg>
<div class="t " style="left:1503.0px;top:939.2px;font-size:18px;font-weight:400;color:#1f2430;">0</div>
<div class="t " style="left:1665.2px;top:939.2px;font-size:18px;font-weight:400;color:#1f2430;">0</div>
<svg style="left:1836.600px;top:945.8px" width="12" height="12" viewBox="0 0 12 12" stroke="#5b3fd8" stroke-width="1.300"><path d="M6 0 V12 M0 6 H12"/></svg>
<div class="t " style="left:1852.0px;top:941.8px;font-size:18px;font-weight:400;color:#5b3fd8;letter-spacing:-0.383px;">Note</div>
<div class="t " style="left:2052.7px;top:939.2px;font-size:18px;font-weight:400;color:#1f2430;letter-spacing:-0.212px;">2699</div>
<div class="abs" style="left:2210px;top:920.3px;width:143px;height:123.0px;overflow:hidden"><div class="t " style="left:5.5px;top:19.0px;font-size:18px;font-weight:400;color:#8b95a7;letter-spacing:-0.619px;">Create:</div><div class="t " style="left:66.7px;top:19.0px;font-size:18px;font-weight:400;color:#1f2430;letter-spacing:-0.280px;">19 Mar 2026</div><div class="t " style="left:5.5px;top:51.0px;font-size:18px;font-weight:400;color:#8b95a7;letter-spacing:-0.650px;">Update:</div><div class="t " style="left:5.5px;top:84.1px;font-size:18px;font-weight:400;color:#1f2430;letter-spacing:-0.382px;">19 Mar 2026 20:4</div></div>
<div class="sep" style="top:1042.8px"></div>
<div class="cb" style="left:340px;top:1062.7px"></div>
<div class="img" style="left:390px;top:1058.9px;filter:blur(0.45px);"><svg width="60" height="60" viewBox="0 0 60 60" style="position:static;display:block"><rect width="60" height="60" fill="#fff"/>
<path d="M15 1.4 L19.2 7.8 H10.800 Z" fill="#f04858"/><path d="M15 3 l1.600 2.600 h-3.200z" fill="#dc1f3c"/><rect x="10.800" y="7.300" width="8.400" height="0.700" fill="#f59aa4"/>
<polygon points="8.96,48.27 21.60,51.11 35.50,49.53 50.66,44.48 52.56,43.21 52.56,44.48 37.39,51.11 21.60,52.69 10.85,50.16" fill="#ededf0"/>
<polygon points="6.94,41.82 10.85,44.35 16.54,45.61 22.86,45.36 30.44,43.72 38.03,41.44 45.61,38.98 52.31,37.21 52.69,40.05 51.93,42.08 46.87,43.97 40.55,45.87 34.23,47.45 27.91,48.71 21.60,49.34 16.54,49.03 12.12,47.45 8.96,45.23 6.94,43.21" fill="#f1f1f4"/>
<polygon points="6.94,43.21 8.96,45.23 12.12,47.45 16.54,49.03 21.60,49.34 27.91,48.71 34.23,47.45 40.55,45.87 46.87,43.97 51.93,42.08 52.24,42.90 46.87,44.86 40.55,46.75 34.23,48.27 27.91,49.53 21.60,50.16 16.54,49.85 11.80,48.27 8.64,46.06 6.81,43.97" fill="#a4a4ae"/>
<polygon points="6.75,40.68 8.33,37.53 11.48,35.31 16.54,33.73 20.33,32.47 24.12,29.31 27.91,25.52 31.07,22.36 34.23,20.46 36.76,21.10 39.92,24.89 41.18,26.78 43.71,22.99 46.87,21.73 50.03,21.10 51.61,22.04 52.24,23.62 51.61,28.68 51.17,33.73 52.24,37.53 45.61,39.42 38.03,41.95 30.44,44.16 22.86,45.74 16.54,45.93 10.85,44.67 7.06,42.26" fill="#2a2a2d" stroke="#2a2a2d" stroke-width="0.600" stroke-linejoin="round"/>
<polygon points="41.18,26.78 43.71,22.99 46.87,21.73 50.03,21.10 51.42,22.04 50.66,24.89 48.77,28.05 45.61,30.57 42.45,29.94" fill="#0e0e10"/>
<polygon points="26.97,26.47 31.07,22.36 34.23,20.78 37.08,21.41 39.92,24.89 41.82,28.05 40.55,30.57 36.76,28.68 33.60,26.47 30.44,25.83 28.55,27.41" fill="#3d3d42"/>
<path d="M29 25.600 L35 22.300 Q38 23.300 39.800 27.600" stroke="#5e5e64" stroke-width="0.900" fill="none"/>
<polygon points="8.96,39.42 12.75,37.21 17.80,36.26 22.86,37.53 19.70,39.42 14.01,40.05" fill="#3b3b40"/>
<path d="M8.500 40.800 Q14 37.600 21.500 39.500" stroke="#6a6a70" stroke-width="0.800" fill="none"/>
<polygon points="39.92,33.10 47.19,35.63 47.82,36.58 40.55,34.05" fill="#e4e4e8"/>
<polygon points="19.70,33.10 24.12,35.63 24.44,36.39 20.08,33.86" fill="#b9b9c0"/>
<path d="M33.600 19.700 l1.500-1.300 1.700 1.700 -1.300 0.700z" fill="#e8384a"/>
<path d="M49.500 21.300 q2.200-.3 2.500 2 l-.3 2.400 q-1.200-2.400-2.200-4.400z" fill="#55555a"/>
<g fill="#0b0b0c"><circle cx="29" cy="31.800" r=".62"/><circle cx="31.400" cy="30.700" r=".62"/><circle cx="33.800" cy="29.700" r=".62"/><circle cx="30" cy="34.200" r=".62"/><circle cx="32.400" cy="33.200" r=".62"/><circle cx="34.800" cy="32.200" r=".62"/><circle cx="37.200" cy="31.200" r=".62"/><circle cx="31" cy="36.600" r=".62"/><circle cx="33.400" cy="35.600" r=".62"/><circle cx="35.800" cy="34.600" r=".62"/><circle cx="38.200" cy="33.600" r=".62"/></g>
</svg></div>
<div class="t " style="left:460.3px;top:1063.6px;font-size:17.5px;font-weight:400;color:#1f2430;letter-spacing:-0.211px;">足力健老人鞋中老年</div>
<div class="t " style="left:460.3px;top:1091.1px;font-size:17.5px;font-weight:400;color:#1f2430;letter-spacing:-0.109px;">健步鞋冬季爸爸休...</div>
<div class="t " style="left:460.3px;top:1116.2px;font-size:15px;font-weight:400;color:#929aa8;letter-spacing:-0.132px;">黑色 男款-45</div>
<div class="t " style="left:665.4px;top:1062.7px;font-size:18px;font-weight:400;color:#1f2430;letter-spacing:-0.442px;">No Category</div>
<div class="t " style="left:827.9px;top:1065.7px;font-size:18px;font-weight:400;color:#6b7280;letter-spacing:-1.267px;">THB</div>
<div class="t " style="left:867.6px;top:1065.7px;font-size:18px;font-weight:400;color:#1f2430;letter-spacing:-0.337px;">9.00</div>
<svg style="left:909px;top:1068.1px" width="16" height="14.500" viewBox="0 0 16 14.500" fill="none" stroke="#1f2430" stroke-width="1.400" stroke-linejoin="round"><path d="M2.300 9.400 L9.900 1.300 Q10.700 0.500 11.600 1.300 L13.100 2.700 Q13.900 3.500 13.100 4.400 L5.600 12.500 L2 13.400 Z"/><path d="M8.600 2.700 L11.800 5.700" stroke-width="1.1"/><path d="M0.300 13.700 H15.800"/></svg>
<div class="t " style="left:1021.5px;top:1065.7px;font-size:18px;font-weight:400;color:#1f2430;letter-spacing:-0.029px;">Multiple(22)</div>
<svg style="left:1128.3px;top:1067.9px" width="9" height="14.5" viewBox="0 0 9 14.5" fill="none" stroke="#1f2430" stroke-width="1.6"><path d="M1 0.8 L7.800 7.250 L1 13.700"/></svg>
<div class="t " style="left:1183.6px;top:1065.7px;font-size:18px;font-weight:400;color:#1f2430;letter-spacing:-0.578px;">224 PCS</div>
<svg style="left:1264.3999999999999px;top:1067.9px" width="9" height="14.5" viewBox="0 0 9 14.5" fill="none" stroke="#1f2430" stroke-width="1.6"><path d="M1 0.8 L7.800 7.250 L1 13.700"/></svg>
<div class="t " style="left:1346.8px;top:1065.7px;font-size:18px;font-weight:400;color:#1f2430;">1</div>
<svg style="left:1369px;top:1067.9px" width="9" height="14.5" viewBox="0 0 9 14.5" fill="none" stroke="#1f2430" stroke-width="1.6"><path d="M1 0.8 L7.800 7.250 L1 13.700"/></svg>
<div class="t " style="left:1503.0px;top:1062.7px;font-size:18px;font-weight:400;color:#1f2430;">0</div>
<div class="t " style="left:1665.2px;top:1062.7px;font-size:18px;font-weight:400;color:#1f2430;">0</div>
<svg style="left:1836.600px;top:1069.3px" width="12" height="12" viewBox="0 0 12 12" stroke="#5b3fd8" stroke-width="1.300"><path d="M6 0 V12 M0 6 H12"/></svg>
<div class="t " style="left:1852.0px;top:1065.3px;font-size:18px;font-weight:400;color:#5b3fd8;letter-spacing:-0.383px;">Note</div>
<div class="t " style="left:2052.7px;top:1062.7px;font-size:18px;font-weight:400;color:#1f2430;letter-spacing:-0.212px;">2699</div>
<div class="abs" style="left:2210px;top:1043.9px;width:143px;height:123.0px;overflow:hidden"><div class="t " style="left:5.5px;top:19.0px;font-size:18px;font-weight:400;color:#8b95a7;letter-spacing:-0.619px;">Create:</div><div class="t " style="left:66.7px;top:19.0px;font-size:18px;font-weight:400;color:#1f2430;letter-spacing:-0.280px;">19 Mar 2026</div><div class="t " style="left:5.5px;top:51.0px;font-size:18px;font-weight:400;color:#8b95a7;letter-spacing:-0.650px;">Update:</div><div class="t " style="left:5.5px;top:84.1px;font-size:18px;font-weight:400;color:#1f2430;letter-spacing:-0.382px;">19 Mar 2026 20:4</div></div>
<div class="sep" style="top:1165.9px"></div>
<div class="cb" style="left:340px;top:1185.8px"></div>
<div class="img" style="left:390px;top:1182.0px;filter:blur(0.45px);"><svg width="60" height="60" viewBox="0 0 60 60" style="position:static;display:block"><rect width="60" height="60" fill="#fff"/>
<path d="M15 1.4 L19.2 7.8 H10.800 Z" fill="#f04858"/><path d="M15 3 l1.600 2.600 h-3.200z" fill="#dc1f3c"/><rect x="10.800" y="7.300" width="8.400" height="0.700" fill="#f59aa4"/>
<polygon points="8.96,48.27 21.60,51.11 35.50,49.53 50.66,44.48 52.56,43.21 52.56,44.48 37.39,51.11 21.60,52.69 10.85,50.16" fill="#ededf0"/>
<polygon points="6.94,41.82 10.85,44.35 16.54,45.61 22.86,45.36 30.44,43.72 38.03,41.44 45.61,38.98 52.31,37.21 52.69,40.05 51.93,42.08 46.87,43.97 40.55,45.87 34.23,47.45 27.91,48.71 21.60,49.34 16.54,49.03 12.12,47.45 8.96,45.23 6.94,43.21" fill="#f1f1f4"/>
<polygon points="6.94,43.21 8.96,45.23 12.12,47.45 16.54,49.03 21.60,49.34 27.91,48.71 34.23,47.45 40.55,45.87 46.87,43.97 51.93,42.08 52.24,42.90 46.87,44.86 40.55,46.75 34.23,48.27 27.91,49.53 21.60,50.16 16.54,49.85 11.80,48.27 8.64,46.06 6.81,43.97" fill="#a4a4ae"/>
<polygon points="6.75,40.68 8.33,37.53 11.48,35.31 16.54,33.73 20.33,32.47 24.12,29.31 27.91,25.52 31.07,22.36 34.23,20.46 36.76,21.10 39.92,24.89 41.18,26.78 43.71,22.99 46.87,21.73 50.03,21.10 51.61,22.04 52.24,23.62 51.61,28.68 51.17,33.73 52.24,37.53 45.61,39.42 38.03,41.95 30.44,44.16 22.86,45.74 16.54,45.93 10.85,44.67 7.06,42.26" fill="#2a2a2d" stroke="#2a2a2d" stroke-width="0.600" stroke-linejoin="round"/>
<polygon points="41.18,26.78 43.71,22.99 46.87,21.73 50.03,21.10 51.42,22.04 50.66,24.89 48.77,28.05 45.61,30.57 42.45,29.94" fill="#0e0e10"/>
<polygon points="26.97,26.47 31.07,22.36 34.23,20.78 37.08,21.41 39.92,24.89 41.82,28.05 40.55,30.57 36.76,28.68 33.60,26.47 30.44,25.83 28.55,27.41" fill="#3d3d42"/>
<path d="M29 25.600 L35 22.300 Q38 23.300 39.800 27.600" stroke="#5e5e64" stroke-width="0.900" fill="none"/>
<polygon points="8.96,39.42 12.75,37.21 17.80,36.26 22.86,37.53 19.70,39.42 14.01,40.05" fill="#3b3b40"/>
<path d="M8.500 40.800 Q14 37.600 21.500 39.500" stroke="#6a6a70" stroke-width="0.800" fill="none"/>
<polygon points="39.92,33.10 47.19,35.63 47.82,36.58 40.55,34.05" fill="#e4e4e8"/>
<polygon points="19.70,33.10 24.12,35.63 24.44,36.39 20.08,33.86" fill="#b9b9c0"/>
<path d="M33.600 19.700 l1.500-1.300 1.700 1.700 -1.300 0.700z" fill="#e8384a"/>
<path d="M49.500 21.300 q2.200-.3 2.500 2 l-.3 2.400 q-1.200-2.400-2.200-4.400z" fill="#55555a"/>
<g fill="#0b0b0c"><circle cx="29" cy="31.800" r=".62"/><circle cx="31.400" cy="30.700" r=".62"/><circle cx="33.800" cy="29.700" r=".62"/><circle cx="30" cy="34.200" r=".62"/><circle cx="32.400" cy="33.200" r=".62"/><circle cx="34.800" cy="32.200" r=".62"/><circle cx="37.200" cy="31.200" r=".62"/><circle cx="31" cy="36.600" r=".62"/><circle cx="33.400" cy="35.600" r=".62"/><circle cx="35.800" cy="34.600" r=".62"/><circle cx="38.200" cy="33.600" r=".62"/></g>
</svg></div>
<div class="t " style="left:460.3px;top:1186.9px;font-size:17.5px;font-weight:400;color:#1f2430;letter-spacing:-0.211px;">足力健老人鞋中老年</div>
<div class="t " style="left:460.3px;top:1215.2px;font-size:17.5px;font-weight:400;color:#1f2430;letter-spacing:-0.109px;">健步鞋冬季爸爸休...</div>
<div class="t " style="left:460.3px;top:1239.5px;font-size:15px;font-weight:400;color:#929aa8;letter-spacing:-0.132px;">黑色 男款-44</div>
<div class="t " style="left:665.4px;top:1185.9px;font-size:18px;font-weight:400;color:#1f2430;letter-spacing:-0.442px;">No Category</div>
<div class="t " style="left:827.9px;top:1188.9px;font-size:18px;font-weight:400;color:#6b7280;letter-spacing:-1.267px;">THB</div>
<div class="t " style="left:867.6px;top:1188.9px;font-size:18px;font-weight:400;color:#1f2430;letter-spacing:-0.337px;">8.00</div>
<svg style="left:909px;top:1191.3px" width="16" height="14.500" viewBox="0 0 16 14.500" fill="none" stroke="#1f2430" stroke-width="1.400" stroke-linejoin="round"><path d="M2.300 9.400 L9.900 1.300 Q10.700 0.500 11.600 1.300 L13.100 2.700 Q13.900 3.500 13.100 4.400 L5.600 12.500 L2 13.400 Z"/><path d="M8.600 2.700 L11.800 5.700" stroke-width="1.1"/><path d="M0.300 13.700 H15.800"/></svg>
<div class="t " style="left:1021.5px;top:1188.9px;font-size:18px;font-weight:400;color:#1f2430;letter-spacing:-0.029px;">Multiple(22)</div>
<svg style="left:1128.3px;top:1191.1000000000001px" width="9" height="14.5" viewBox="0 0 9 14.5" fill="none" stroke="#1f2430" stroke-width="1.6"><path d="M1 0.8 L7.800 7.250 L1 13.700"/></svg>
<div class="t " style="left:1183.6px;top:1188.9px;font-size:18px;font-weight:400;color:#1f2430;letter-spacing:-0.578px;">224 PCS</div>
<svg style="left:1264.3999999999999px;top:1191.1000000000001px" width="9" height="14.5" viewBox="0 0 9 14.5" fill="none" stroke="#1f2430" stroke-width="1.6"><path d="M1 0.8 L7.800 7.250 L1 13.700"/></svg>
<div class="t " style="left:1346.8px;top:1188.9px;font-size:18px;font-weight:400;color:#1f2430;">1</div>
<svg style="left:1369px;top:1191.1000000000001px" width="9" height="14.5" viewBox="0 0 9 14.5" fill="none" stroke="#1f2430" stroke-width="1.6"><path d="M1 0.8 L7.800 7.250 L1 13.700"/></svg>
<div class="t " style="left:1503.0px;top:1185.9px;font-size:18px;font-weight:400;color:#1f2430;">0</div>
<div class="t " style="left:1665.2px;top:1185.9px;font-size:18px;font-weight:400;color:#1f2430;">0</div>
<svg style="left:1836.600px;top:1192.5px" width="12" height="12" viewBox="0 0 12 12" stroke="#5b3fd8" stroke-width="1.300"><path d="M6 0 V12 M0 6 H12"/></svg>
<div class="t " style="left:1852.0px;top:1188.5px;font-size:18px;font-weight:400;color:#5b3fd8;letter-spacing:-0.383px;">Note</div>
<div class="t " style="left:2052.7px;top:1185.9px;font-size:18px;font-weight:400;color:#1f2430;letter-spacing:-0.212px;">2699</div>
<div class="abs" style="left:2210px;top:1167.0px;width:143px;height:94.0px;overflow:hidden"><div class="t " style="left:5.5px;top:19.0px;font-size:18px;font-weight:400;color:#8b95a7;letter-spacing:-0.619px;">Create:</div><div class="t " style="left:66.7px;top:19.0px;font-size:18px;font-weight:400;color:#1f2430;letter-spacing:-0.280px;">19 Mar 2026</div><div class="t " style="left:5.5px;top:51.0px;font-size:18px;font-weight:400;color:#8b95a7;letter-spacing:-0.650px;">Update:</div><div class="t " style="left:5.5px;top:84.1px;font-size:18px;font-weight:400;color:#1f2430;letter-spacing:-0.382px;">19 Mar 2026 20:4</div></div>
<div class="abs" style="left:2345px;top:250px;width:8px;height:1011px;background:linear-gradient(90deg,rgba(0,0,0,0),rgba(0,0,0,.04) 50%,rgba(0,0,0,.15))"></div>
<div class="abs" style="left:2353px;top:250px;width:175px;height:122px;background:#f7f8fa"></div>
<div class="abs" style="left:2353px;top:372px;width:175px;height:889px;background:#fff"></div>
<div class="t " style="left:2373.8px;top:391.9px;font-size:18px;font-weight:400;color:#4a30b8;letter-spacing:-0.229px;">Disable Distribution</div>
<div class="t " style="left:2373.8px;top:431.8px;font-size:18px;font-weight:400;color:#4a30b8;letter-spacing:-0.205px;">Distribution Logs</div>
<div class="abs" style="left:2353px;top:493.8px;width:175px;height:1px;background:#ebedf1"></div>
<div class="t " style="left:2373.8px;top:515.9px;font-size:18px;font-weight:400;color:#4a30b8;letter-spacing:-0.229px;">Disable Distribution</div>
<div class="t " style="left:2373.8px;top:555.8px;font-size:18px;font-weight:400;color:#4a30b8;letter-spacing:-0.205px;">Distribution Logs</div>
<div class="abs" style="left:2353px;top:635.9px;width:175px;height:1px;background:#ebedf1"></div>
<div class="t " style="left:2373.8px;top:657.1px;font-size:18px;font-weight:400;color:#4a30b8;letter-spacing:-0.229px;">Disable Distribution</div>
<div class="t " style="left:2373.8px;top:697.0px;font-size:18px;font-weight:400;color:#4a30b8;letter-spacing:-0.205px;">Distribution Logs</div>
<div class="abs" style="left:2353px;top:778.0px;width:175px;height:1px;background:#ebedf1"></div>
<div class="t " style="left:2373.8px;top:799.2px;font-size:18px;font-weight:400;color:#4a30b8;letter-spacing:-0.229px;">Disable Distribution</div>
<div class="t " style="left:2373.8px;top:839.1px;font-size:18px;font-weight:400;color:#4a30b8;letter-spacing:-0.205px;">Distribution Logs</div>
<div class="abs" style="left:2353px;top:919.4px;width:175px;height:1px;background:#ebedf1"></div>
<div class="t " style="left:2373.8px;top:940.7px;font-size:18px;font-weight:400;color:#4a30b8;letter-spacing:-0.229px;">Disable Distribution</div>
<div class="t " style="left:2373.8px;top:980.6px;font-size:18px;font-weight:400;color:#4a30b8;letter-spacing:-0.205px;">Distribution Logs</div>
<div class="abs" style="left:2353px;top:1042.8px;width:175px;height:1px;background:#ebedf1"></div>
<div class="t " style="left:2373.8px;top:1063.9px;font-size:18px;font-weight:400;color:#4a30b8;letter-spacing:-0.229px;">Disable Distribution</div>
<div class="t " style="left:2373.8px;top:1103.8px;font-size:18px;font-weight:400;color:#4a30b8;letter-spacing:-0.205px;">Distribution Logs</div>
<div class="abs" style="left:2353px;top:1165.9px;width:175px;height:1px;background:#ebedf1"></div>
<div class="t " style="left:2373.8px;top:1187.8px;font-size:18px;font-weight:400;color:#4a30b8;letter-spacing:-0.229px;">Disable Distribution</div>
<div class="t " style="left:2373.8px;top:1228.5px;font-size:18px;font-weight:400;color:#4a30b8;letter-spacing:-0.205px;">Distribution Logs</div>
<div class="abs" style="left:319px;top:1261px;width:2209px;height:6px;background:#eceef2"></div>
<div class="abs" style="left:320px;top:1261px;width:2120px;height:8px;background:#aaafba;border-radius:4px"></div>
<div class="abs" style="left:2198px;top:240px;width:254.500px;height:89.500px;background:#fff;border-radius:9px;box-shadow:0 6px 24px rgba(20,25,50,.16),0 1px 5px rgba(20,25,50,.08)"></div>
<div class="t " style="left:2218.5px;top:258.3px;font-size:18px;font-weight:400;color:#2b2f3a;letter-spacing:-0.720px;">Add Single SKU</div>
<div class="t " style="left:2218.5px;top:298.1px;font-size:18px;font-weight:400;color:#2b2f3a;letter-spacing:-0.564px;">Add current SKU</div>
<svg style="left:0;top:0" width="2548" height="1266" viewBox="0 0 2548 1266"><path d="M1799.600 525.600 L2153.600 257.900 L2147.700 250.800 L2180.100 244 L2164.700 273.100 L2161.100 267.500 L1801 527.200 Z" fill="#ec1c24"/></svg>
<svg style="left:2518px;top:645px" width="30" height="30" viewBox="0 0 30 30" fill="none" stroke="#3b28a8" stroke-width="2.200"><circle cx="13.900" cy="13.200" r="9.300"/><path d="M20.700 19.800 L29 27.800"/></svg>
<div class="abs" style="left:2498px;top:946px;width:45px;height:45px;background:#abafba;border-radius:22.500px 0 0 22.500px"></div>
<svg style="left:2513px;top:960px" width="13" height="18" viewBox="0 0 13 18" fill="none" stroke="#fff" stroke-width="2"><path d="M11 1.500 L2.500 9 L11 16.600"/></svg>
<div class="abs" style="left:2498.200px;top:1206.200px;width:44.200px;height:44.200px;border-radius:50%;background:#fff;box-shadow:0 2px 14px rgba(30,40,70,.16)"></div>
<div class="abs" style="left:2509.800px;top:1218.800px;width:20.400px;height:20.200px;border-radius:0 50% 50% 50%;background:linear-gradient(135deg,#00d6c4 0%,#0a86ec 45%,#0a6cf0 100%)"></div>
<svg style="left:2509.800px;top:1218.800px" width="20.400" height="20.200" viewBox="0 0 20.400 20.200"><g fill="none" stroke="#fff" stroke-width="1.300" stroke-linecap="round"><path d="M4.300 7.600 Q6 5.200 7.700 7.600"/><path d="M12.300 7.600 Q14 5.200 15.700 7.600"/><path d="M6.300 11.600 Q10.200 17.400 14.100 11.600"/></g></svg>
</body></html>
